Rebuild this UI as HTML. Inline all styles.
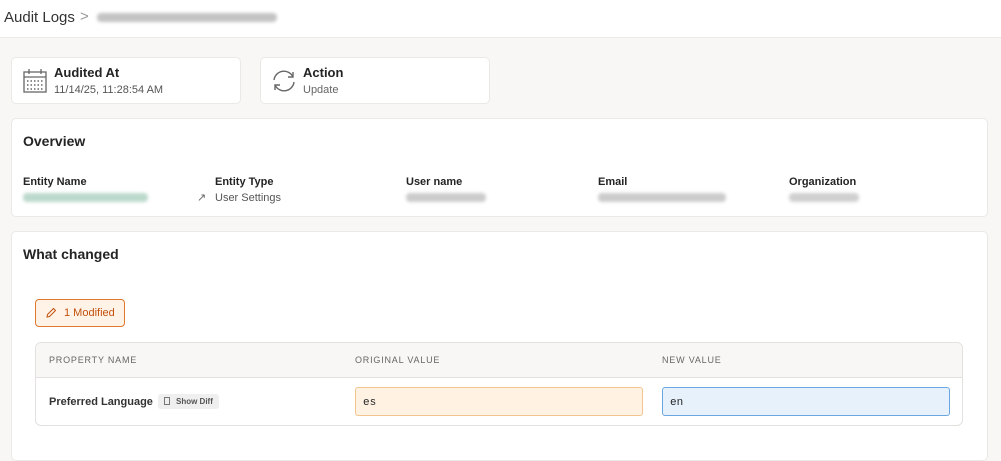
<!DOCTYPE html>
<html><head><style>
*{box-sizing:border-box;margin:0;padding:0}
body{width:1001px;height:449px;overflow:hidden;background:#f8f7f5;font-family:"Liberation Sans",sans-serif;color:#242424;position:relative}
.hdr{position:absolute;left:0;top:0;width:1001px;height:38px;background:#fff;border-bottom:1px solid #ebebeb}
.abs{position:absolute}
.card{position:absolute;background:#fff;border:1px solid #ebe9e6;border-radius:5px}
.blur{position:absolute;height:9px;border-radius:4px;filter:blur(1.5px)}
.lbl{position:absolute;font-size:11px;font-weight:bold;color:#242424}
</style></head><body>
<div class="hdr">
 <div class="abs" style="left:4px;top:9px;font-size:15px;color:#333">Audit Logs</div>
 <div class="abs" style="left:80px;top:8px;font-size:15px;color:#999">&gt;</div>
 <div class="blur" style="left:97px;top:13px;width:180px;background:#c4c4c4"></div>
</div>
<div class="card" style="left:11px;top:57px;width:230px;height:47px">
 <svg class="abs" style="left:10px;top:10px" width="26" height="26" viewBox="0 0 26 26" fill="none" stroke="#666" stroke-width="1.3"><rect x="2" y="4" width="22" height="20"/><line x1="2" y1="9" x2="24" y2="9"/><line x1="7" y1="1" x2="7" y2="6"/><line x1="19" y1="1" x2="19" y2="6"/><g stroke-width="1.6" stroke-dasharray="1.5 2"><line x1="5" y1="13" x2="22" y2="13"/><line x1="5" y1="17" x2="22" y2="17"/><line x1="5" y1="21" x2="22" y2="21"/></g></svg>
 <div class="abs" style="left:42px;top:7px;font-size:13px;font-weight:bold">Audited At</div>
 <div class="abs" style="left:42px;top:26px;font-size:11px;color:#555">11/14/25, 11:28:54 AM</div>
</div>
<div class="card" style="left:260px;top:57px;width:230px;height:47px">
 <svg class="abs" style="left:10px;top:10px" width="26" height="26" viewBox="0 0 26 26" fill="none" stroke="#666" stroke-width="1.4"><path d="M3 12 A10 10 0 0 1 22 9"/><path d="M23 14 A10 10 0 0 1 4 17"/><path d="M22 4 L22 9 L17 9"/><path d="M4 22 L4 17 L9 17"/></svg>
 <div class="abs" style="left:42px;top:7px;font-size:13px;font-weight:bold">Action</div>
 <div class="abs" style="left:42px;top:26px;font-size:11px;color:#666">Update</div>
</div>
<div class="card" style="left:11px;top:118px;width:977px;height:99px">
 <div class="abs" style="left:11px;top:14px;font-size:14px;font-weight:bold">Overview</div>
 <div class="lbl" style="left:11px;top:57px">Entity Name</div>
 <div class="blur" style="left:11px;top:74px;width:125px;background:#bcd9cc"></div>
 <div class="lbl" style="left:203px;top:57px">Entity Type</div>
 <div class="abs" style="left:185px;top:72px;font-size:11px;color:#666">&#x2197;&#xFE0E;</div>
 <div class="abs" style="left:203px;top:73px;font-size:11px;color:#555">User Settings</div>
 <div class="lbl" style="left:394px;top:57px">User name</div>
 <div class="blur" style="left:394px;top:74px;width:80px;background:#ccc"></div>
 <div class="lbl" style="left:586px;top:57px">Email</div>
 <div class="blur" style="left:586px;top:74px;width:128px;background:#ccc"></div>
 <div class="lbl" style="left:777px;top:57px">Organization</div>
 <div class="blur" style="left:777px;top:74px;width:70px;background:#d0d0d0"></div>
</div>
<div class="card" style="left:11px;top:231px;width:977px;height:230px">
 <div class="abs" style="left:11px;top:14px;font-size:14px;font-weight:bold">What changed</div>
 <div class="abs" style="left:23px;top:67px;width:90px;height:28px;border:1px solid #e0782f;border-radius:4px;background:#fff3e8;color:#c2500c;font-size:11px;padding:7px 0 0 28px">1 Modified</div>
 <svg class="abs" style="left:33px;top:75px" width="12" height="12" viewBox="0 0 12 12" fill="none" stroke="#c2500c" stroke-width="1"><path d="M2 10 L2.5 7.5 L8.5 1.5 L10.5 3.5 L4.5 9.5 Z"/></svg>
 <div class="abs" style="left:23px;top:110px;width:928px;height:84px;border:1px solid #e3e1de;border-radius:6px;overflow:hidden">
  <div class="abs" style="left:0;top:0;width:928px;height:35px;background:#f8f7f5;border-bottom:1px solid #e3e1de"></div>
  <div class="abs" style="left:13px;top:12px;font-size:9px;letter-spacing:.8px;color:#666">PROPERTY NAME</div>
  <div class="abs" style="left:319px;top:12px;font-size:9px;letter-spacing:.8px;color:#666">ORIGINAL VALUE</div>
  <div class="abs" style="left:626px;top:12px;font-size:9px;letter-spacing:.8px;color:#666">NEW VALUE</div>
  <div class="abs" style="left:13px;top:53px;font-size:11px;font-weight:bold;color:#333">Preferred Language</div>
  <div class="abs" style="left:122px;top:51px;width:61px;height:15px;background:#efefef;border-radius:3px;font-size:8px;font-weight:bold;color:#555;padding:3px 0 0 18px">Show Diff</div>
  <div class="abs" style="left:128px;top:54px;width:6px;height:8px;border:1px solid #777"></div>
  <div class="abs" style="left:319px;top:44px;width:288px;height:29px;background:#fff2e3;border:1px solid #f2c48e;border-radius:3px;font-size:11px;padding:9px 0 0 7px;font-family:'Liberation Mono',monospace">es</div>
  <div class="abs" style="left:626px;top:44px;width:288px;height:29px;background:#e6f1fc;border:1px solid #6aa7e0;border-radius:3px;font-size:11px;padding:9px 0 0 7px;font-family:'Liberation Mono',monospace">en</div>
 </div>
</div>
</body></html>
